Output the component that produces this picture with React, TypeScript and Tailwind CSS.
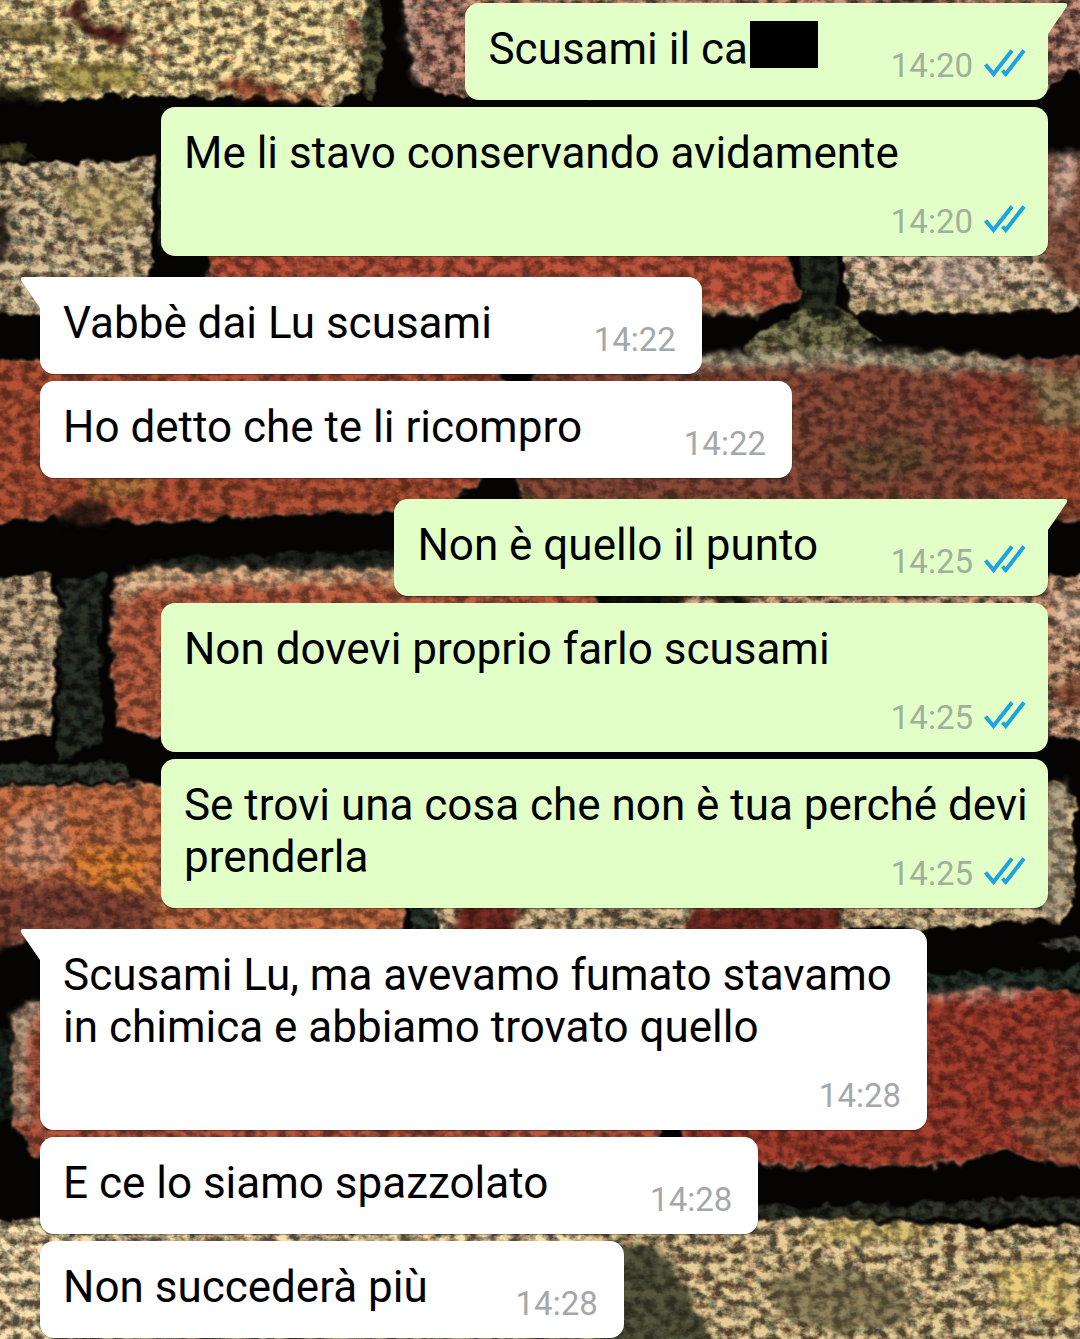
import React from 'react';
import clsx from 'clsx';

type Message = {
  text: string;
  time: string;
  mine: boolean;
  tail?: boolean;
  censored?: boolean;
  compact?: boolean;
};

const messages: Message[] = [
  { text: 'Scusami il ca', time: '14:20', mine: true, tail: true, censored: true },
  { text: 'Me li stavo conservando avidamente', time: '14:20', mine: true },
  { text: 'Vabbè dai Lu scusami', time: '14:22', mine: false, tail: true },
  { text: 'Ho detto che te li ricompro', time: '14:22', mine: false },
  { text: 'Non è quello il punto', time: '14:25', mine: true, tail: true },
  { text: 'Non dovevi proprio farlo scusami', time: '14:25', mine: true },
  { text: 'Se trovi una cosa che non è tua perché devi prenderla', time: '14:25', mine: true },
  { text: 'Scusami Lu, ma avevamo fumato stavamo in chimica e abbiamo trovato quello', time: '14:28', mine: false, tail: true },
  { text: 'E ce lo siamo spazzolato', time: '14:28', mine: false },
  { text: 'Non succederà più', time: '14:28', mine: false, compact: true },
];

const redBricks = [
  { d: 'M210 170H775L790 260L800 300L760 314H230L208 280Z', fill: '#b04e37' },
  { d: 'M-40 362L120 358H500L508 420L478 484L440 510L300 514L160 522L60 516L-40 526Z', fill: '#a64c31' },
  { d: 'M536 366L700 362L860 354L1120 358V528L1060 522L800 510H530L512 470Z', fill: '#7f4534' },
  { d: 'M116 580L130 570H590L600 620V735H140L116 724L112 650Z', fill: '#b15b3e' },
  { d: 'M-40 784L60 786L180 782H400L412 840L406 930L300 936L60 938L-40 946Z', fill: '#bd6a40' },
  { d: 'M14 1016L30 1002H660V1160L100 1162L30 1156L12 1120Z', fill: '#a6513a' },
  { d: 'M650 1000L920 992L1050 990L1120 1002V1172L1060 1166L1000 1150L975 1160L930 1166H690Z', fill: '#9a3a2a' },
];

const tanBricks = [
  { d: 'M-40 -40H366L362 40L358 92L330 104L250 98L120 97L60 102L-40 90Z', fill: '#d2bd86' },
  { d: 'M404 -40H1120V78L1070 70L1040 96H440L418 86L406 50Z', fill: '#a87a67' },
  { d: 'M-40 160L80 163L156 158L153 240L150 312L100 318L-40 312Z', fill: '#b5a27e' },
  { d: 'M842 160H1120V308L960 312L860 314L842 290Z', fill: '#bfa789' },
  { d: 'M-40 576L50 574L60 610L56 680L52 735L-40 742Z', fill: '#b09877' },
  { d: 'M660 574H1120V738L1040 736H670Z', fill: '#b58c6e' },
  { d: 'M440 780H1060L1076 800L1074 910L1060 922L900 928L440 934L430 880Z', fill: '#b7a17a' },
  { d: 'M-40 1220L120 1214H600V1370H-40Z', fill: '#d0bb91' },
  { d: 'M590 1222L800 1218L1000 1228L1120 1224V1370H590Z', fill: '#c0aa7c' },
];

const stains = [
  // yellow brick, top left
  { d: 'M-20 18L40 22L78 30L60 44L-20 42Z', fill: '#8a7a48' },
  { d: 'M60 12L78 -4L88 4L84 20L108 22L132 32L134 44L112 50L82 34Z', fill: '#4a1c12' },
  { d: 'M148 44L162 50L156 66L148 58Z', fill: '#9c4a3a' },
  { d: 'M205 86L238 74L262 80L290 92L330 90L322 104L240 99Z', fill: '#a35338' },
  { d: 'M346 20L362 16L358 60L348 46Z', fill: '#8f4530' },
  { d: 'M-20 84L30 84L50 92L40 104L-20 100Z', fill: '#2c2a18' },
  { d: 'M40 60L140 62L150 90L60 96Z', fill: '#a6964f' },
  { d: 'M404 0L416 0L414 50L430 90L418 90L404 50Z', fill: '#c3a597' },
  { d: 'M900 -20H945V4H900Z', fill: '#1b1a14' },
  // row 2
  { d: 'M-20 200L12 206L10 262L-20 268Z', fill: '#362b26' },
  { d: 'M48 180L140 170L146 220L90 240Z', fill: '#baa56e' },
  { d: 'M920 258H985L996 290L930 304Z', fill: '#cdb29c' },
  { d: 'M1040 150H1120V304L1064 290L1036 260Z', fill: '#87543f' },
  { d: 'M1056 150L1078 150L1066 210L1052 220Z', fill: '#c4a08b' },
  { d: 'M702 306L762 304L760 314L702 315Z', fill: '#c9ac83' },
  { d: 'M845 300L1060 296V308L860 313Z', fill: '#d2bd87' },
  // row 3
  { d: 'M530 364L700 352L860 346L1000 356L1060 376L1000 372L860 366L700 368Z', fill: '#ada183' },
  { d: 'M956 366L1010 372L1020 410L990 424L956 412Z', fill: '#8a3d2d' },
  { d: 'M970 430L1040 420L1120 430V520L1030 500L980 480Z', fill: '#9c482f' },
  { d: 'M1030 374H1120V424L1044 426Z', fill: '#8d7350' },
  { d: 'M830 450L910 430L940 470L860 486Z', fill: '#6b4a31' },
  { d: 'M80 478L160 478L140 500L90 496Z', fill: '#a66a37' },
  { d: 'M60 512L80 500L106 504L110 524L60 526Z', fill: '#321a18' },
  // row 4
  { d: 'M116 578L134 568H420V582L200 584L150 590L120 604Z', fill: '#d5ae85' },
  { d: 'M-20 700H50V712H-20Z', fill: '#4b3a2e' },
  { d: 'M1040 590H1120V640L1060 630Z', fill: '#d2ae91' },
  { d: 'M1044 680H1120V704L1060 712Z', fill: '#8a5239' },
  { d: 'M606 590H690V606H606ZM714 590H752V606H714Z', fill: '#14120e' },
  // row 5
  { d: 'M10 820L60 800L70 860L30 880L0 860Z', fill: '#c98a6b' },
  { d: 'M70 850L150 850L140 890L90 890Z', fill: '#d0772f' },
  { d: 'M-20 890L60 880L160 900L150 940L40 932L-20 960Z', fill: '#7a4032' },
  { d: 'M454 900H520V940H454ZM690 904H845V940H680Z', fill: '#6f2b20' },
  { d: 'M1040 780H1070V914L1040 920Z', fill: '#a8997c' },
  // row 6
  { d: 'M12 1010L30 1000L60 1000L34 1018L26 1060L30 1120L14 1120Z', fill: '#b49a80' },
  { d: 'M926 992L1000 986L1048 992L1000 998L926 1000Z', fill: '#c48f7d' },
  { d: 'M1004 1120L1080 1110V1164L1050 1160Z', fill: '#8e5439' },
  { d: 'M1050 1020H1120V1080L1060 1070Z', fill: '#8e3e30' },
  // row 7
  { d: 'M604 1240L660 1244L690 1290L720 1350H600Z', fill: '#505038' },
  { d: 'M760 1280L820 1262L910 1280L915 1320L840 1336L780 1316Z', fill: '#857955' },
  { d: 'M830 1220L940 1226L920 1240L800 1244Z', fill: '#d5bd70' },
  { d: 'M990 1262L1070 1256L1080 1320L1000 1310Z', fill: '#d9c071' },
];

const moss = [
  { d: 'M362 -20H380L384 60L376 104L360 96Z', fill: '#4c4e34' },
  { d: 'M740 346L770 326L800 306L850 310L880 340L830 356L760 358Z', fill: '#6d6b48' },
  { d: 'M800 250H838L836 320L800 310Z', fill: '#20261c' },
  { d: 'M-20 140L20 146L40 158L-20 160Z', fill: '#3f3d22' },
  { d: 'M60 576L106 574L100 650L104 740L56 760L60 660Z', fill: '#22281f' },
  { d: 'M160 160H180V250H160Z', fill: '#262c20' },
  { d: 'M170 556L400 550V568L120 568Z', fill: '#1d211b' },
  { d: 'M-20 764L120 762L130 782L-20 784Z', fill: '#2b3027' },
  { d: 'M926 974L1120 964V988L926 994Z', fill: '#222d25' },
  { d: 'M1040 940H1120V956L1050 950Z', fill: '#3c3c36' },
  { d: 'M600 1200L800 1206L1120 1194V1222L800 1218L600 1216Z', fill: '#2b2e24' },
  { d: 'M412 900H436V940H412Z', fill: '#283228' },
  { d: 'M-20 1020L10 1030L12 1120L-20 1130Z', fill: '#18211b' },
];

// contrast: how strongly the grain darkens the fill, base: flat part of the fill
const StoneFilter = ({ id, contrast, base }: { id: string; contrast: number; base: number }) => (
  <filter id={id} x="-40" y="-40" width="1160" height="1419" filterUnits="userSpaceOnUse" colorInterpolationFilters="sRGB">
    <feTurbulence type="fractalNoise" baseFrequency="0.06" numOctaves="3" seed="4" result="warp" />
    <feDisplacementMap in="SourceGraphic" in2="warp" scale="16" xChannelSelector="R" yChannelSelector="G" result="rough" />
    <feGaussianBlur in="rough" stdDeviation="1" result="soft" />
    <feTurbulence type="fractalNoise" baseFrequency="0.09 0.11" numOctaves="4" seed="23" result="noise" />
    <feColorMatrix
      in="noise"
      values="2.6 0.3 0 0 -0.9  2.6 0 0.2 0 -0.86  2.6 0 0.4 0 -0.96  0 0 0 0 1"
      result="grain"
    />
    <feComposite in="soft" in2="grain" operator="arithmetic" k1={contrast} k2={base} k3="0" k4="0" result="textured" />
    <feComposite in="textured" in2="soft" operator="in" />
  </filter>
);

const BrickWall = () => (
  <svg
    className="absolute inset-0 h-full w-full"
    viewBox="0 0 1080 1339"
    preserveAspectRatio="xMidYMid slice"
    aria-hidden="true"
  >
    <defs>
      <StoneFilter id="smooth-stone" contrast={0.5} base={0.58} />
      <StoneFilter id="rough-stone" contrast={0.8} base={0.4} />
      <filter id="blotch" x="-20%" y="-20%" width="140%" height="140%">
        <feGaussianBlur stdDeviation="4" />
      </filter>
    </defs>
    <rect width="1080" height="1339" fill="#050403" />
    <g filter="url(#rough-stone)">
      {moss.map((shape) => (
        <path key={shape.d} d={shape.d} fill={shape.fill} />
      ))}
      {tanBricks.map((shape) => (
        <path key={shape.d} d={shape.d} fill={shape.fill} />
      ))}
    </g>
    <g filter="url(#smooth-stone)">
      {redBricks.map((shape) => (
        <path key={shape.d} d={shape.d} fill={shape.fill} stroke="#c9a98a" strokeOpacity="0.4" strokeWidth="4" />
      ))}
      <g filter="url(#blotch)">
        {stains.map((shape) => (
          <path key={shape.d} d={shape.d} fill={shape.fill} />
        ))}
      </g>
    </g>
  </svg>
);

const ReadTicks = () => (
  <svg className="mb-[9px] h-7 w-[42px]" viewBox="0 0 42 28" fill="none" stroke="#1ba4dd" strokeWidth="4" role="img" aria-label="Letto">
    <path d="M1.500 15.500L9.500 25L28 1.500" />
    <path d="M18.500 21.500L21.700 25L40 1.500" />
  </svg>
);

const Tail = ({ mine }: { mine: boolean }) => (
  <svg
    className={clsx('absolute top-0 h-8 w-[21px]', mine ? '-right-5 text-[#e1ffc7]' : '-left-5 -scale-x-100 text-white')}
    viewBox="0 0 21 32"
    fill="currentColor"
    aria-hidden="true"
  >
    <path d="M0 0H18Q21.500 0.500 19.500 4L1 31V32H0Z" />
  </svg>
);

const Bubble = ({ message }: { message: Message }) => {
  const { text, time, mine, tail, censored, compact } = message;

  return (
    <li
      className={clsx(
        'relative max-w-[88%] rounded-[14px] pt-5 pr-[18px] pb-[25px] pl-[23px] shadow-[0_1px_1px_rgba(0,0,0,0.35)]',
        mine ? 'self-end bg-[#e1ffc7]' : 'self-start bg-white',
        tail && (mine ? 'rounded-tr-none' : 'rounded-tl-none'),
        tail && 'mt-[14px] first:mt-0'
      )}
    >
      {tail && <Tail mine={mine} />}
      <p className="text-[44px] leading-[52px] text-black">
        {text}
        {censored && <span className="-my-1 ml-0.5 inline-block h-[47px] w-[68px] bg-black" />}
        {/* keeps the last line clear of the time */}
        <span className={clsx('inline-block h-px', mine ? 'w-[212px]' : compact ? 'w-[178px]' : 'w-[192px]')} />
      </p>
      <div className={clsx('absolute bottom-[14px] flex items-end gap-[11px]', mine ? 'right-[22px]' : 'right-[26px]')}>
        <time className={clsx('text-[33px] leading-10', mine ? 'text-[#a0b09a]' : 'text-[#a3a8ab]')}>{time}</time>
        {mine && <ReadTicks />}
      </div>
    </li>
  );
};

const App = () => {
  return (
    <main className="relative min-h-screen overflow-hidden bg-black font-[Roboto,sans-serif]">
      <BrickWall />
      <ul className="relative flex flex-col gap-[7px] pt-[3px] pr-8 pl-10">
        {messages.map((message) => (
          <Bubble key={message.text} message={message} />
        ))}
      </ul>
    </main>
  );
};

export default App;
